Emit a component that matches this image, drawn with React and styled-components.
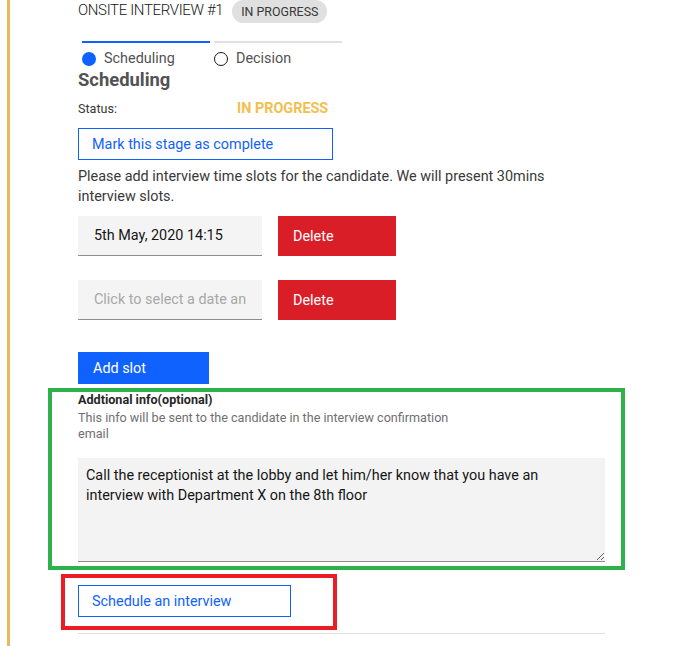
import React from "react";
import styled, { createGlobalStyle } from "styled-components";

const GlobalStyle = createGlobalStyle`
  body {
    margin: 0;
    background: #ffffff;
    font-family: "Roboto", "Liberation Sans", sans-serif;
    color: #393939;
  }
  * {
    box-sizing: border-box;
  }
`;

const Page = styled.div`
  min-height: 100vh;
  margin-left: 7px;
  border-left: 3px solid #e9b95c;
  padding-left: 68px;
`;

const Column = styled.div`
  width: 527px;
  display: flex;
  flex-direction: column;
  align-items: flex-start;
`;

const Header = styled.div`
  display: flex;
  align-items: flex-start;
  gap: 9px;
  height: 23px;
`;

const Title = styled.h2`
  margin: 0;
  font-size: 15px;
  font-weight: 300;
  letter-spacing: -0.35px;
  line-height: 20px;
  color: #161616;
`;

const Tag = styled.span`
  height: 23px;
  padding: 0 9px;
  border-radius: 12px;
  background: #e0e0e0;
  font-size: 12.4px;
  line-height: 23px;
  color: #393939;
`;

const Tabs = styled.div`
  display: flex;
  gap: 4px;
  margin: 18px 0 0 4px;
`;

const Tab = styled.div`
  width: 128px;
  border-top: 2px solid ${(p) => (p.$active ? "#0f62fe" : "#e0e0e0")};
  padding-top: 7px;
  display: flex;
  align-items: center;
  gap: 8px;
  font-size: 14.4px;
  line-height: 18px;
  color: #525252;
`;

const Dot = styled.span`
  width: 14px;
  height: 14px;
  border-radius: 50%;
  flex-shrink: 0;
  background: ${(p) => (p.$filled ? "#0f62fe" : "transparent")};
  border: ${(p) => (p.$filled ? "none" : "1.5px solid #161616")};
`;

const Heading = styled.h3`
  margin: 1px 0 0;
  font-size: 18.4px;
  font-weight: 700;
  line-height: 22px;
  color: #525252;
`;

const StatusRow = styled.div`
  display: flex;
  align-items: baseline;
  margin-top: 8px;
  line-height: 20px;
`;

const StatusLabel = styled.span`
  width: 159px;
  font-size: 12.6px;
  color: #393939;
`;

const StatusValue = styled.span`
  font-size: 14.4px;
  font-weight: 700;
  color: #f2c04e;
`;

const GhostButton = styled.button`
  margin-top: ${(p) => p.$mt || 0}px;
  width: ${(p) => p.$w}px;
  height: 32px;
  padding: 0 13px;
  border: 1px solid #0f62fe;
  background: #ffffff;
  color: #0f62fe;
  font-family: inherit;
  font-size: 14.4px;
  text-align: left;
  cursor: pointer;
`;

const Text = styled.p`
  margin: 7px 0 0;
  font-size: 14.4px;
  line-height: 20px;
  color: #393939;
`;

const SlotList = styled.div`
  display: flex;
  flex-direction: column;
  gap: 24px;
  margin-top: 9px;
`;

const SlotRow = styled.div`
  display: flex;
  gap: 16px;
`;

const DateInput = styled.input`
  width: 184px;
  height: 40px;
  padding: 0 16px;
  border: none;
  border-bottom: 1px solid #8d8d8d;
  background: #f4f4f4;
  font-family: inherit;
  font-size: 14.4px;
  color: #161616;
  outline: none;

  &::placeholder {
    color: #a8a8a8;
  }
`;

const SolidButton = styled.button`
  width: ${(p) => p.$w}px;
  height: ${(p) => p.$h}px;
  margin-top: ${(p) => p.$mt || 0}px;
  padding: 0 15px;
  border: none;
  background: ${(p) => p.$bg};
  color: #ffffff;
  font-family: inherit;
  font-size: 14.4px;
  text-align: left;
  cursor: pointer;
`;

const Highlight = styled.div`
  position: relative;
  margin-top: ${(p) => p.$mt || 0}px;
  width: ${(p) => (p.$full ? "100%" : "auto")};

  &::after {
    content: "";
    position: absolute;
    inset: ${(p) => p.$inset};
    border: 4px solid ${(p) => p.$color};
    pointer-events: none;
  }
`;

const InfoSection = styled.div`
  display: flex;
  flex-direction: column;
`;

const FieldLabel = styled.label`
  font-size: 12.6px;
  font-weight: 700;
  line-height: 16px;
  color: #262626;
`;

const Helper = styled.div`
  margin-top: 2px;
  max-width: 390px;
  font-size: 12.6px;
  line-height: 16px;
  color: #6f6f6f;
`;

const Notes = styled.textarea`
  display: block;
  margin-top: 16px;
  width: 527px;
  height: 104px;
  padding: 8px 8px 6px;
  border: none;
  border-bottom: 1px solid #8d8d8d;
  background: #f3f3f3;
  font-family: inherit;
  font-size: 14.4px;
  line-height: 20px;
  color: #161616;
  outline: none;
`;

const Divider = styled.hr`
  width: 527px;
  margin: 16px 0 0;
  border: none;
  border-top: 1px solid #e0e0e0;
`;

export default function App() {
  return (
    <>
      <GlobalStyle />
      <Page>
        <Column>
          <Header>
            <Title>ONSITE INTERVIEW #1</Title>
            <Tag>IN PROGRESS</Tag>
          </Header>

          <Tabs>
            <Tab $active>
              <Dot $filled />
              Scheduling
            </Tab>
            <Tab>
              <Dot />
              Decision
            </Tab>
          </Tabs>

          <Heading>Scheduling</Heading>
          <StatusRow>
            <StatusLabel>Status:</StatusLabel>
            <StatusValue>IN PROGRESS</StatusValue>
          </StatusRow>

          <GhostButton $w={255} $mt={9}>
            Mark this stage as complete
          </GhostButton>

          <Text>
            Please add interview time slots for the candidate. We will present
            30mins interview slots.
          </Text>

          <SlotList>
            <SlotRow>
              <DateInput readOnly value="5th May, 2020 14:15" />
              <SolidButton $w={118} $h={40} $bg="#da1e28">
                Delete
              </SolidButton>
            </SlotRow>
            <SlotRow>
              <DateInput readOnly placeholder="Click to select a date and time" />
              <SolidButton $w={118} $h={40} $bg="#da1e28">
                Delete
              </SolidButton>
            </SlotRow>
          </SlotList>

          <SolidButton $w={131} $h={32} $mt={32} $bg="#0f62fe">
            Add slot
          </SolidButton>

          <Highlight $mt={8} $full $inset="-4px -20px -8px -30px" $color="#2db14b">
            <InfoSection>
              <FieldLabel>Addtional info(optional)</FieldLabel>
              <Helper>
                This info will be sent to the candidate in the interview
                confirmation email
              </Helper>
              <Notes
                readOnly
                value="Call the receptionist at the lobby and let him/her know that you have an interview with Department X on the 8th floor"
              />
            </InfoSection>
          </Highlight>

          <Highlight $mt={23} $inset="-11px -46px -13px -17px" $color="#ea1c24">
            <GhostButton $w={213}>Schedule an interview</GhostButton>
          </Highlight>

          <Divider />
        </Column>
      </Page>
    </>
  );
}
